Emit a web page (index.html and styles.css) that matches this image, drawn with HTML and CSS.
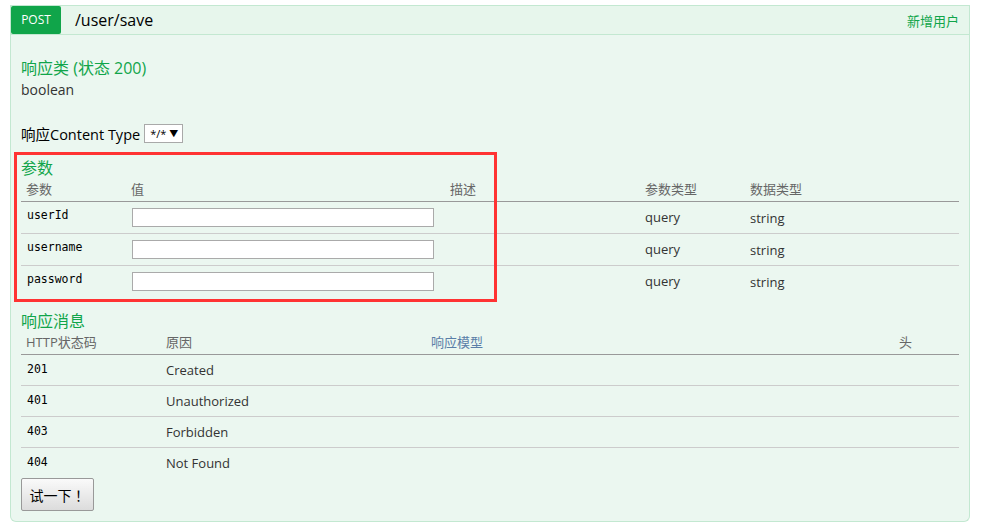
FILE: index.html
```html
<!DOCTYPE html>
<html>
<head>
<meta charset="utf-8">
<link rel="stylesheet" href="styles.css">
</head>
<body>
<div class="op">
  <div class="op-head">
    <span class="method">POST</span>
    <span class="path">/user/save</span>
    <span class="summary">新增用户</span>
  </div>
  <div class="op-body">
    <h4 class="h-resp">响应类 (状态 200)</h4>
    <div class="type">boolean</div>
    <div class="ctype">
      <span>响应Content Type</span>
      <span class="sel"><span>*/*</span><span class="arrow">▼</span></span>
    </div>
    <h4 class="h-params">参数</h4>
    <table class="tbl params">
      <thead>
        <tr><th class="c-name">参数</th><th class="c-val">值</th><th class="c-desc">描述</th><th class="c-ptype">参数类型</th><th>数据类型</th></tr>
      </thead>
      <tbody>
        <tr><td class="code">userId</td><td><input class="inp" type="text"></td><td></td><td>query</td><td class="dt">string</td></tr>
        <tr><td class="code">username</td><td><input class="inp" type="text"></td><td></td><td>query</td><td class="dt">string</td></tr>
        <tr><td class="code">password</td><td><input class="inp" type="text"></td><td></td><td>query</td><td class="dt">string</td></tr>
      </tbody>
    </table>
    <h4 class="h-msgs">响应消息</h4>
    <table class="tbl msgs">
      <thead>
        <tr><th class="c-code">HTTP状态码</th><th class="c-reason">原因</th><th class="c-model">响应模型</th><th>头</th></tr>
      </thead>
      <tbody>
        <tr><td class="code">201</td><td>Created</td><td></td><td></td></tr>
        <tr><td class="code">401</td><td>Unauthorized</td><td></td><td></td></tr>
        <tr><td class="code">403</td><td>Forbidden</td><td></td><td></td></tr>
        <tr><td class="code">404</td><td>Not Found</td><td></td><td></td></tr>
      </tbody>
    </table>
    <button class="try">试一下！</button>
  </div>
  <div class="mark"></div>
</div>
</body>
</html>
```
FILE: styles.css
```css
body {
  margin: 5px 22px 0 10px;
  background: #fff;
  font-family: "Open Sans", "Noto Sans CJK SC", sans-serif;
  font-size: 14px;
  color: #333;
}
.op {
  position: relative;
  width: 960px;
}
.op-head {
  display: flex;
  align-items: center;
  height: 28px;
  background: #e7f6ec;
  border: 1px solid #c3e8d1;
  padding-right: 10px;
}
.method {
  width: 50px;
  height: 28px;
  background: #10a54a;
  color: #fff;
  font-size: 12px;
  line-height: 28px;
  text-align: center;
  border-radius: 2px;
}
.path {
  margin-left: 14px;
  font-size: 16px;
  color: #000;
  flex: 1;
}
.summary {
  font-size: 13px;
  color: #10a54a;
}
.op-body {
  background: #ebf7f0;
  border: 1px solid #c3e8d1;
  border-top: none;
  border-radius: 0 0 6px 6px;
  padding: 10px 10px 10px;
}
h4 {
  margin: 0;
  font-weight: normal;
  font-size: 16px;
  line-height: 20px;
  color: #10a54a;
}
.h-resp { margin-top: 13px; }
.type { margin-top: 2px; line-height: 20px; color: #333; }
.ctype {
  margin-top: 23px;
  display: flex;
  align-items: center;
  gap: 4px;
  height: 20px;
  color: #000;
}
.ctype > span:first-child { font-size: 14.5px; }
.sel {
  display: inline-flex;
  align-items: center;
  justify-content: space-between;
  box-sizing: border-box;
  width: 39px;
  height: 19px;
  padding: 0 4px 0 5px;
  background: #fff;
  border: 1px solid #a9a9a9;
  font-size: 11px;
  color: #000;
}
.arrow { font-size: 9px; }
.h-params { margin-top: 15px; }
.h-msgs { margin-top: 14px; }
.tbl {
  width: 100%;
  border-collapse: collapse;
  table-layout: fixed;
}
.tbl th {
  text-align: left;
  font-weight: normal;
  font-size: 13px;
  line-height: 16px;
  color: #666;
  padding: 3px 5px 4px;
  border-bottom: 1px solid #999;
}
.tbl td {
  font-size: 13px;
  line-height: 19px;
  height: 19px;
  padding: 6px 5px;
  vertical-align: top;
  border-bottom: 1px solid #ccc;
  color: #333;
  box-sizing: content-box;
}
.tbl tbody tr:last-child td { border-bottom: none; }
.tbl td.code {
  font-family: "DejaVu Sans Mono", monospace;
  font-size: 11.5px;
  line-height: 14px;
  color: #000;
  padding-left: 6px;
}
.tbl td.dt { padding-top: 7px; padding-bottom: 5px; }
.params .c-name { width: 95px; }
.params .c-val { width: 309px; }
.params .c-desc { width: 185px; }
.params .c-ptype { width: 95px; }
.inp {
  display: block;
  box-sizing: border-box;
  width: 302px;
  height: 19px;
  margin: 0 0 0 1px;
  border: 1px solid #aaa;
  background: #fff;
  padding: 0 3px;
}
.msgs td { line-height: 18px; height: 18px; }
.msgs td.code { padding-top: 7px; padding-bottom: 5px; }
.msgs .c-code { width: 130px; }
.msgs .c-reason { width: 255px; }
.msgs .c-model { width: 458px; color: #5a7ea8; }
.try {
  display: block;
  box-sizing: border-box;
  width: 73px;
  height: 33px;
  margin: 0;
  padding: 0;
  white-space: nowrap;
  font-family: "Noto Sans CJK JP", "Noto Sans CJK SC", sans-serif;
  font-size: 14px;
  color: #000;
  border: 1px solid #999;
  border-radius: 2px;
  background: linear-gradient(#fafafa, #dcdcdc);
}
.mark {
  position: absolute;
  left: 4px;
  top: 147px;
  width: 477px;
  height: 144px;
  border: 3px solid #f33;
  pointer-events: none;
}
```
